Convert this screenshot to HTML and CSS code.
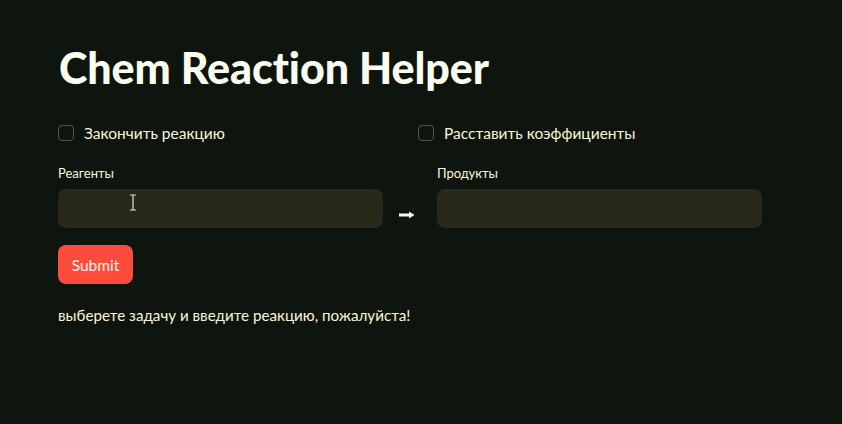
FILE: index.html
```html
<!DOCTYPE html>
<html lang="ru">
<head>
<meta charset="utf-8">
<title>Chem Reaction Helper</title>
<link rel="stylesheet" href="styles.css">
</head>
<body>
<main class="app">
  <h1 class="title">Chem Reaction Helper</h1>
  <div class="row two">
    <label class="check"><span class="box"></span><span>Закончить реакцию</span></label>
    <label class="check"><span class="box"></span><span>Расставить коэффициенты</span></label>
  </div>
  <div class="row three">
    <div class="field">
      <div class="label">Реагенты</div>
      <div class="input"><svg class="ibeam" width="8" height="17" viewBox="0 0 8 17"><path d="M1 1h6M1 16h6M4 1v15" stroke="#e8e4c8" stroke-width="1.2" fill="none"/></svg></div>
    </div>
    <div class="arrow">
      <svg width="16" height="8" viewBox="0 0 16 8"><path d="M0 2.5h10V0.5L15.5 4 10 7.5V5.5H0z" fill="#fbf8e6"/></svg>
    </div>
    <div class="field">
      <div class="label">Продукты</div>
      <div class="input"></div>
    </div>
  </div>
  <button class="submit">Submit</button>
  <p class="msg">выберете задачу и введите реакцию, пожалуйста!</p>
</main>
</body>
</html>
```
FILE: styles.css
```css
* { box-sizing: border-box; }
html, body { margin: 0; padding: 0; }
body {
  background: #0e150e;
  color: #faf6dc;
  font-family: "Lato", "Noto Sans", sans-serif;
  width: 842px;
  height: 424px;
  overflow: hidden;
}
.app {
  padding: 38px 80px 0 58px;
  width: 820px;
}
.title {
  margin: 0 0 0 1px;
  font-size: 43px;
  font-weight: 900;
  line-height: 60px;
  color: #fdfdf0;
  font-variant-ligatures: none;
  letter-spacing: -0.1px;
}
.row { display: grid; column-gap: 16px; }
.two { grid-template-columns: 344px 344px; margin-top: 26px; }
.three { grid-template-columns: 325px 22px 325px; margin-top: 21px; }
.check {
  display: flex;
  align-items: center;
  gap: 10px;
  font-size: 15.5px;
  height: 18px;
}
.box {
  width: 16px; height: 16px;
  border: 1px solid #55554a;
  border-radius: 4px;
  flex: none;
}
.label {
  font-size: 13px;
  height: 17px;
  line-height: 17px;
  margin-top: 2px;
  margin-bottom: 7px;
}
.input {
  position: relative;
  height: 39px;
  background: #28281b;
  border-radius: 8px;
}
.ibeam { position: absolute; left: 71px; top: 5px; }
.arrow {
  display: flex;
  align-items: flex-end;
  justify-content: center;
  padding-bottom: 9px;
  padding-right: 6px;
}
.submit {
  display: block;
  margin-top: 17px;
  width: 75px;
  height: 39px;
  border: none;
  border-radius: 8px;
  background: #ff4b3c;
  color: #fff4f0;
  font-family: inherit;
  font-size: 15.5px;
}
.msg {
  margin: 21px 0 0;
  font-size: 15.2px;
  line-height: 20px;
}
```
